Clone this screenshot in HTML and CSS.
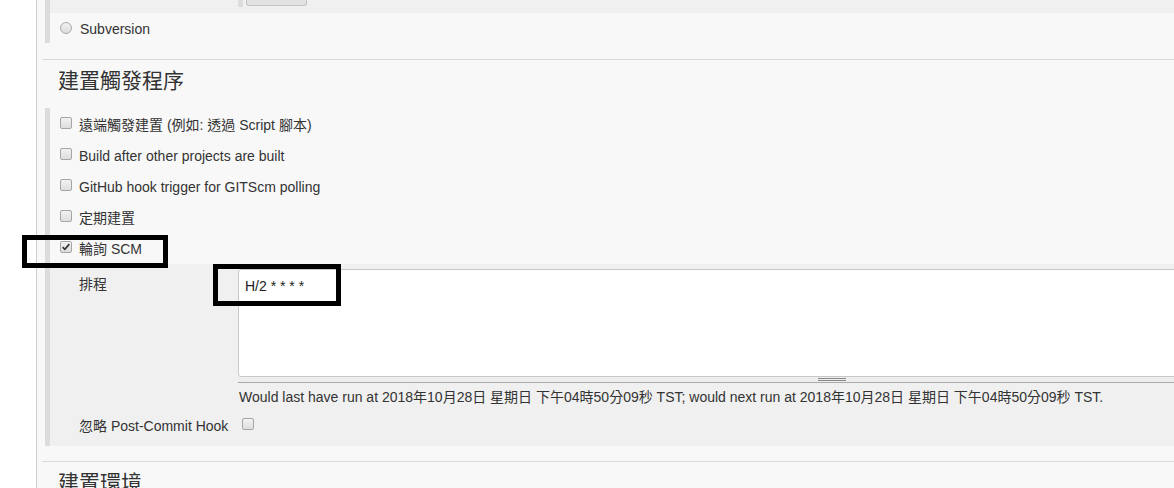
FILE: index.html
```html
<!DOCTYPE html>
<html lang="zh-Hant">
<head>
<meta charset="utf-8">
<title>Jenkins config</title>
<link rel="stylesheet" href="styles.css">
</head>
<body>
<div class="page">
  <div class="gutter"></div>
  <main class="main">
    <div class="block top-block">
      <div class="stub"><span class="stub-bar"></span><span class="stub-btn"></span></div>
      <div class="row radio-row"><span class="radio"></span><span>Subversion</span></div>
    </div>

    <div class="section-rule"></div>
    <h2 class="section-title">建置觸發程序</h2>

    <div class="block section">
      <div class="row"><span class="cb"></span><span>遠端觸發建置 (例如: 透過 Script 腳本)</span></div>
      <div class="row"><span class="cb"></span><span>Build after other projects are built</span></div>
      <div class="row"><span class="cb"></span><span>GitHub hook trigger for GITScm polling</span></div>
      <div class="row"><span class="cb"></span><span>定期建置</span></div>
      <div class="row"><span class="cb checked"><svg viewBox="0 0 12 12" width="10" height="10"><path d="M2 6.2 L4.6 8.8 L10 2.6" fill="none" stroke="#333" stroke-width="2"/></svg></span><span>輪詢 SCM</span></div>

      <div class="nested">
        <div class="field">
          <div class="label">排程</div>
          <div class="control">
            <textarea class="ta" spellcheck="false">H/2 * * * *</textarea>
            <div class="handle"><span class="grip"></span></div>
            <div class="desc">Would last have run at 2018年10月28日 星期日 下午04時50分09秒 TST; would next run at 2018年10月28日 星期日 下午04時50分09秒 TST.</div>
          </div>
        </div>
        <div class="field inline">
          <div class="label label-inline">忽略 Post-Commit Hook</div>
          <div class="control"><span class="cb cb-inline"></span></div>
        </div>
      </div>
    </div>

    <div class="section-rule rule-2"></div>
    <h2 class="section-title">建置環境</h2>
  </main>

  <div class="annot annot-1"></div>
  <div class="annot annot-2"></div>
</div>
</body>
</html>
```

FILE: styles.css
```css
html, body {
  margin: 0;
  padding: 0;
}

body {
  background: #fff;
  color: #333;
  font-family: "Liberation Sans", "Noto Sans CJK TC", sans-serif;
  font-size: 14px;
  line-height: 16px;
  overflow: hidden;
}

.page {
  position: relative;
  display: flex;
  width: 1174px;
  height: 488px;
  overflow: hidden;
}

.gutter {
  flex: none;
  width: 36px;
  background: #fff;
}

.main {
  flex: 1;
  min-width: 0;
  border-left: 1px solid #cfcfcf;
  background: #f8f8f8;
}

.block {
  margin-left: 8px;
  border-left: 5px solid #dcdcdc;
}

/* top block (end of SCM section) */
.stub {
  display: flex;
  align-items: flex-start;
  gap: 3px;
  height: 13px;
  padding-left: 188px;
  background: #f0f0f0;
}

.stub-bar {
  width: 5px;
  height: 7px;
  background: #dcdcdc;
}

.stub-btn {
  box-sizing: border-box;
  width: 61px;
  height: 6px;
  background: #e2e2e2;
  border: 1px solid #c4c4c4;
  border-top: none;
  border-radius: 0 0 3px 3px;
}

.row {
  display: flex;
  align-items: center;
  height: 31px;
  padding-left: 10px;
  gap: 7px;
}

.radio-row {
  box-sizing: border-box;
  height: 30px;
  padding-top: 2px;
  gap: 8px;
}

.radio {
  box-sizing: border-box;
  width: 12px;
  height: 12px;
  border-radius: 50%;
  border: 1px solid #aaa;
  background: linear-gradient(#f2f2f2, #dcdcdc);
  margin-bottom: 3px;
}

.cb {
  box-sizing: border-box;
  display: inline-flex;
  align-items: center;
  justify-content: center;
  width: 12px;
  height: 12px;
  border: 1px solid #a6a6a6;
  border-radius: 2px;
  background: linear-gradient(#f1f1f1, #dedede);
  margin-bottom: 3px;
  flex: none;
}

.cb.checked svg {
  display: block;
}

.section-rule {
  margin: 16px 0 0 5px;
  height: 1px;
  background: #dadada;
}

.rule-2 {
  margin-top: 15px;
}

.section-title {
  margin: 8px 0 15px 21px;
  font-size: 21px;
  line-height: 25px;
  font-weight: normal;
  color: #333;
}

.section {
  padding-top: 1px;
}

.nested {
  background: #f0f0f0;
}

.field {
  display: flex;
  padding-top: 5px;
}

.label {
  box-sizing: border-box;
  flex: none;
  width: 188px;
  padding: 7px 0 0 29px;
}

.control {
  flex: none;
  width: 1188px;
}

.ta {
  display: block;
  box-sizing: border-box;
  width: 100%;
  height: 108px;
  margin: 0;
  padding: 8px 6px;
  border: 1px solid #c8c8c8;
  border-radius: 3px;
  background: #fff;
  color: #222;
  font-family: "Liberation Sans", "Noto Sans CJK TC", sans-serif;
  font-size: 14px;
  line-height: 16px;
  resize: none;
  outline: none;
}

.handle {
  box-sizing: border-box;
  display: flex;
  justify-content: center;
  align-items: center;
  height: 6px;
  background: #eeeeee;
  border-bottom: 1px solid #ababab;
}

.grip {
  width: 28px;
  height: 3px;
  border-top: 1px solid #888;
  border-bottom: 1px solid #888;
  box-sizing: border-box;
}

.desc {
  margin-top: 6px;
  padding-left: 1px;
  white-space: nowrap;
}

.field.inline {
  height: 41px;
  padding-top: 0;
  align-items: center;
}

.label-inline {
  padding-top: 0;
}

.cb-inline {
  margin: 0 0 1px 4px;
}

/* annotation overlays */
.annot {
  position: absolute;
  box-sizing: border-box;
  border: 5px solid #000;
}

.annot-1 {
  left: 22px;
  top: 235px;
  width: 146px;
  height: 33px;
}

.annot-2 {
  left: 213px;
  top: 264px;
  width: 128px;
  height: 42px;
}
```
